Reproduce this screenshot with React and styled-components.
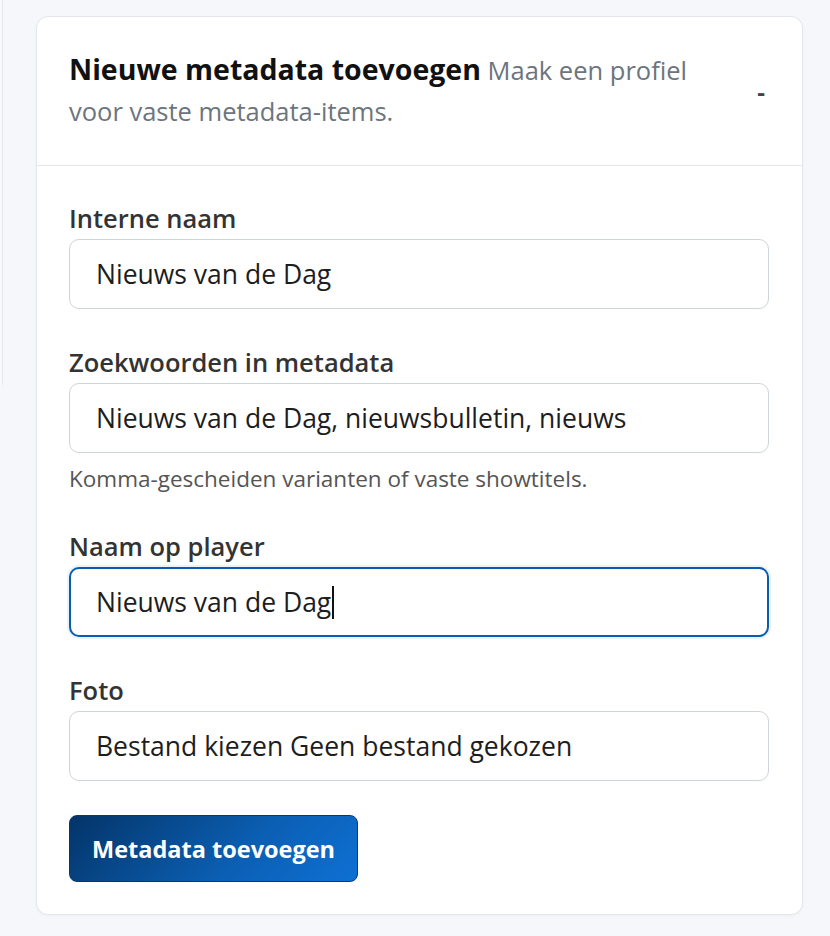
import styled, { createGlobalStyle } from "styled-components";

const GlobalStyle = createGlobalStyle`
  html, body {
    margin: 0;
    padding: 0;
    background: #f5f7fa;
    font-family: "Open Sans", "Noto Sans", sans-serif;
    color: #212529;
    overflow: hidden;
  }
`;

const Page = styled.div`
  display: flex;
  align-items: flex-start;
  gap: 33px;
  padding-top: 16px;
  min-height: 936px;
  box-sizing: border-box;
`;

// the neighbouring column, only its right edge is visible
const SideEdge = styled.div`
  width: 2px;
  height: 385px;
  margin-top: -16px;
  border-right: 1px solid #e4e7eb;
  background: #f8f9fb;
`;

const Card = styled.section`
  width: 767px;
  box-sizing: border-box;
  background: #fff;
  border: 1px solid #e3e6ea;
  border-radius: 12px;
  box-shadow: 0 1px 3px rgba(0, 0, 0, 0.04);
`;

const CardHeader = styled.header`
  display: flex;
  align-items: center;
  gap: 40px;
  padding: 32px 30px 33px 32px;
  border-bottom: 1px solid #e3e6ea;
`;

const HeaderText = styled.div`
  flex: 1;
  font-size: 25.5px;
  line-height: 41px;
`;

const Title = styled.strong`
  font-size: 28.5px;
  font-weight: 700;
  line-height: 41px;
  color: #111;
`;

const Subtitle = styled.span`
  font-size: 25.5px;
  line-height: 41px;
  color: #6c757d;
`;

const Toggle = styled.button`
  width: 22px;
  height: 22px;
  padding: 0;
  border: none;
  background: none;
  font-family: inherit;
  font-size: 24px;
  font-weight: 700;
  color: #444;
  line-height: 1;
  cursor: pointer;
`;

const CardBody = styled.form`
  display: flex;
  flex-direction: column;
  gap: 38px;
  padding: 37px 33px 32px 32px;
`;

const Field = styled.div`
  display: flex;
  flex-direction: column;
`;

const Label = styled.label`
  font-size: 25.5px;
  font-weight: 600;
  color: #333;
  line-height: 30px;
  margin-bottom: 6px;
`;

const Input = styled.div`
  height: 70px;
  box-sizing: border-box;
  display: flex;
  align-items: center;
  padding: 0 26px;
  border: ${(p) => (p.$focused ? "2px solid #0a5cae" : "1px solid #ced4da")};
  padding-left: ${(p) => (p.$focused ? "25px" : "26px")};
  border-radius: 10px;
  background: #fff;
  font-size: 26.5px;
  color: #1d1d1d;
  box-shadow: ${(p) => (p.$focused ? "0 0 0 2px rgba(10, 92, 174, 0.08)" : "none")};
`;

const Caret = styled.span`
  display: inline-block;
  width: 1.5px;
  height: 33px;
  margin-left: 1px;
  background: #111;
`;

const Hint = styled.small`
  margin-top: 12px;
  font-size: 22.5px;
  line-height: 28px;
  color: #555;
`;

const SubmitButton = styled.button`
  align-self: flex-start;
  margin-top: -4px;
  height: 67px;
  padding: 0 22px;
  border: 1px solid #06386e;
  border-radius: 8px;
  background: linear-gradient(135deg, #043468 0%, #0b5fb3 60%, #0e70d4 100%);
  color: #fff;
  font-family: inherit;
  font-size: 23.5px;
  font-weight: 700;
  cursor: pointer;
`;

export default function App() {
  return (
    <>
      <GlobalStyle />
      <Page>
        <SideEdge />
        <Card>
          <CardHeader>
            <HeaderText>
              <Title>Nieuwe metadata toevoegen</Title>{" "}
              <Subtitle>Maak een profiel voor vaste metadata-items.</Subtitle>
            </HeaderText>
            <Toggle type="button">-</Toggle>
          </CardHeader>
          <CardBody>
            <Field>
              <Label>Interne naam</Label>
              <Input>Nieuws van de Dag</Input>
            </Field>
            <Field>
              <Label>Zoekwoorden in metadata</Label>
              <Input>Nieuws van de Dag, nieuwsbulletin, nieuws</Input>
              <Hint>Komma-gescheiden varianten of vaste showtitels.</Hint>
            </Field>
            <Field>
              <Label>Naam op player</Label>
              <Input $focused>
                Nieuws van de Dag
                <Caret />
              </Input>
            </Field>
            <Field>
              <Label>Foto</Label>
              <Input>Bestand kiezen Geen bestand gekozen</Input>
            </Field>
            <SubmitButton type="button">Metadata toevoegen</SubmitButton>
          </CardBody>
        </Card>
      </Page>
    </>
  );
}
